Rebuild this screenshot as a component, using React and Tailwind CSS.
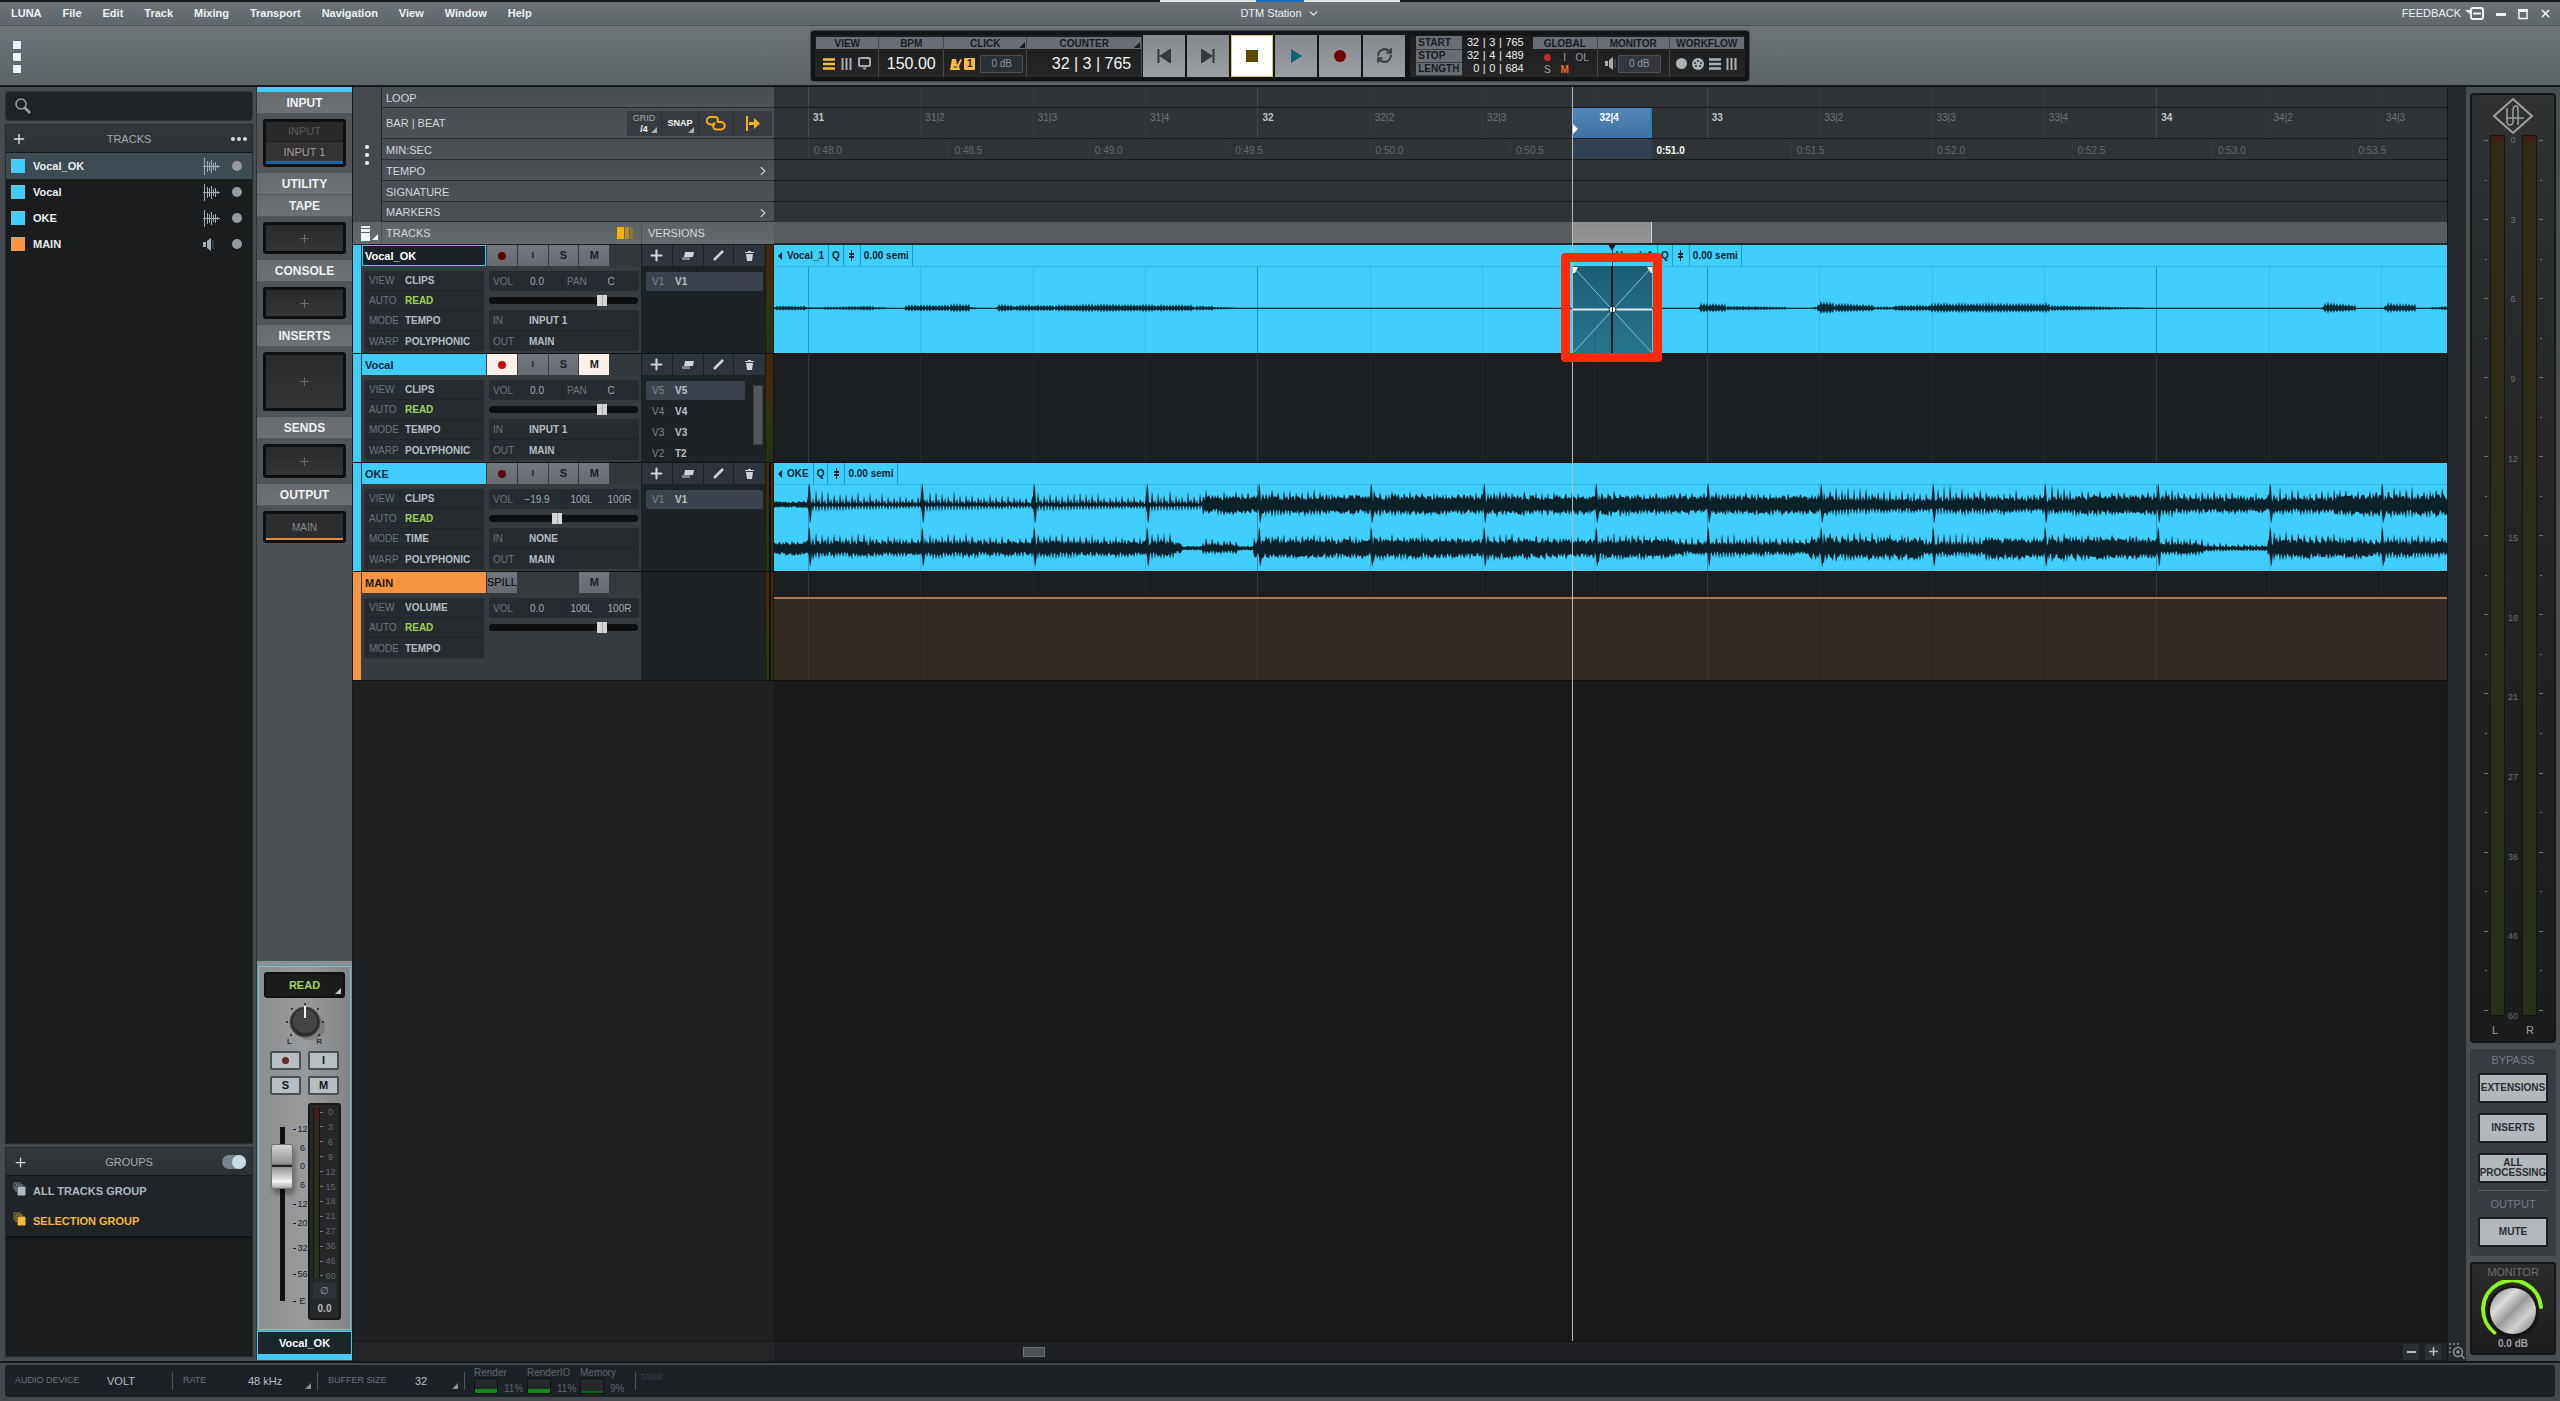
import { useState } from 'react'
import { ChevronDown, ChevronRight, Plus, RefreshCw, X } from 'lucide-react'

const menuItems = ['LUNA', 'File', 'Edit', 'Track', 'Mixing', 'Transport', 'Navigation', 'View', 'Window', 'Help']

const tracks = [
  {
    name: 'Vocal_OK', selected: true, vol: '0.0', level: 78, pan: ['C'],
    info: [['VIEW', 'CLIPS'], ['AUTO', 'READ'], ['MODE', 'TEMPO'], ['WARP', 'POLYPHONIC']],
    io: [['IN', 'INPUT 1'], ['OUT', 'MAIN']],
    versions: [['V1', 'V1']],
  },
  {
    name: 'Vocal', armed: true, muted: true, vol: '0.0', level: 78, pan: ['C'],
    info: [['VIEW', 'CLIPS'], ['AUTO', 'READ'], ['MODE', 'TEMPO'], ['WARP', 'POLYPHONIC']],
    io: [['IN', 'INPUT 1'], ['OUT', 'MAIN']],
    versions: [['V5', 'V5'], ['V4', 'V4'], ['V3', 'V3'], ['V2', 'T2']],
  },
  {
    name: 'OKE', stereo: true, vol: '−19.9', level: 45, pan: ['100L', '100R'],
    info: [['VIEW', 'CLIPS'], ['AUTO', 'READ'], ['MODE', 'TIME'], ['WARP', 'POLYPHONIC']],
    io: [['IN', 'NONE'], ['OUT', 'MAIN']],
    versions: [['V1', 'V1']],
  },
  {
    name: 'MAIN', stereo: true, main: true, vol: '0.0', level: 78, pan: ['100L', '100R'],
    info: [['VIEW', 'VOLUME'], ['AUTO', 'READ'], ['MODE', 'TEMPO']],
    io: [],
    versions: [],
  },
]

// The visible timeline is 1673 units wide, bar 31 starts at unit 34
const VIEW_W = 1673
const FIRST_BEAT = 34
const BEAT = 112.35
const HALF_SECOND = 140.4
const pct = (units) => `${(units / VIEW_W) * 100}%`

const beats = Array.from({ length: 15 }, (_, i) => ({
  x: FIRST_BEAT + i * BEAT,
  bar: i % 4 === 0,
  label: i % 4 === 0 ? `${31 + i / 4}` : `${31 + Math.floor(i / 4)}|${(i % 4) + 1}`,
}))

const times = Array.from({ length: 12 }, (_, i) => ({
  x: FIRST_BEAT + i * HALF_SECOND,
  label: `0:${(48 + i * 0.5).toFixed(1)}`,
}))

const noise = (n) => {
  const v = Math.sin(n * 12.9898) * 43758.5453
  return v - Math.floor(v)
}

function toPath(up, down, center) {
  const top = up.map((v, x) => `${x},${(center - v).toFixed(1)}`)
  const bottom = down.map((v, x) => `${x},${(center + v).toFixed(1)}`).reverse()
  return `M${top.join('L')}L${bottom.join('L')}Z`
}

// from, to, start level, end level
const vocalParts = [
  [0, 33, 3, 3], [33, 48, 1, 1], [48, 100, 2, 3], [100, 112, 2, 1],
  [131, 175, 4, 4], [175, 196, 5, 5], [196, 203, 2, 1],
  [223, 240, 5, 4], [240, 280, 4, 4], [280, 320, 4, 5], [320, 420, 5, 4], [420, 440, 3, 3], [440, 462, 2, 1],
  [925, 952, 6, 5], [952, 1012, 3, 2],
  [1037, 1044, 1, 2], [1044, 1060, 9, 7], [1060, 1101, 6, 4], [1101, 1119, 2, 2], [1119, 1155, 4, 4],
  [1155, 1276, 6, 6], [1276, 1370, 4, 1],
  [1549, 1582, 7, 4], [1611, 1642, 6, 5], [1656, 1673, 1, 3],
]

function vocalPath() {
  const up = []
  for (let x = 0; x <= VIEW_W; x++) {
    const part = vocalParts.find(([a, b]) => x >= a && x < b)
    let v = 0.6
    if (part) {
      const [a, b, s, e] = part
      const level = s + ((e - s) * (x - a)) / (b - a)
      const edge = Math.min(1, (x - a + 2) / 4)
      v = Math.max(0.8, level * edge * (x % 3 === 0 ? 1 : 0.5) * (0.8 + noise(x) * 0.3))
    }
    up.push(v)
  }
  return toPath(up, up.map((v) => v * 0.75), 64)
}

// from, to, body, peaks
const upperParts = [[0, 34, 3, 2], [34, 429, 2, 11], [429, 560, 8, 9], [560, 780, 9, 6], [780, 1060, 9, 6], [1060, 1180, 6, 13], [1180, 1300, 7, 11], [1300, 1400, 9, 8], [1400, 1560, 7, 9], [1560, 1674, 10, 9]]
const lowerParts = [[0, 34, 7, 4], [34, 400, 7, 9], [400, 408, 5, 5], [408, 429, 2, 1], [429, 464, 4, 9], [464, 480, 2, 2], [480, 900, 9, 7], [900, 1036, 6, 9], [1036, 1150, 10, 7], [1150, 1210, 6, 10], [1210, 1384, 10, 7], [1384, 1430, 5, 7], [1430, 1494, 2, 5], [1494, 1600, 9, 8], [1600, 1674, 7, 9]]

function mixPath(parts, center, seed) {
  const up = []
  const down = []
  for (let x = 0; x <= VIEW_W; x++) {
    const [, , body, peak] = parts.find(([a, b]) => x >= a && x < b)
    const sinceBeat = (((x - FIRST_BEAT) % BEAT) + BEAT) % BEAT
    const fall = 1.1 - sinceBeat / 180
    const tooth = x % 6 === 0 ? 1 : x % 6 === 1 ? 0.3 : x % 3 === 0 ? 0.4 : 0
    let u = body * (0.45 + noise(x + seed) * 0.55) + tooth * peak * fall * (0.7 + noise(x * 3 + seed) * 0.6)
    let d = body * (0.5 + noise(x * 7 + seed) * 0.6) + (x % 3 === 0 ? 0.5 : 0) * peak * fall
    if (sinceBeat < 4 && x > 30) {
      u = [9, 22, 17, 3][Math.floor(sinceBeat)]
      d = [4, 9, 19, 15][Math.floor(sinceBeat)]
    }
    up.push(u)
    down.push(d)
  }
  return toPath(up, down, center)
}

const vocalWave = vocalPath()
const upperWave = mixPath(upperParts, 42, 11)
const lowerWave = mixPath(lowerParts, 86, 57)

function Corner({ className = '' }) {
  return (
    <svg width="6" height="6" viewBox="0 0 6 6" className={className} aria-hidden="true">
      <path d="M6 0V6H0Z" fill="currentColor" />
    </svg>
  )
}

function MenuBar() {
  return (
    <header className="h-[26px] shrink-0 border-t-2 border-b border-t-[#17181c] border-b-[#4c5255] bg-linear-to-b from-[#6c7276] to-[#5f676b] grid grid-cols-[1fr_auto_1fr] items-center text-[11px] text-[#eef3f5]">
      <nav className="flex gap-[21px] pl-[11px] font-bold">
        {menuItems.map((item) => (
          <button key={item} type="button">{item}</button>
        ))}
      </nav>
      <div className="relative h-full flex items-center">
        <span className="absolute -top-[2px] left-1/2 -translate-x-1/2 w-[240px] h-[2px] bg-[#dfe6ea] flex justify-center">
          <span className="w-12 h-[2px] bg-[#1d6fc0]" />
        </span>
        <button type="button" className="flex items-center gap-[5px]">
          DTM Station <ChevronDown size={13} strokeWidth={2} />
        </button>
      </div>
      <div className="flex items-center justify-end pr-1">
        <button type="button" className="flex items-center gap-1 mr-[5px]">
          FEEDBACK
          <svg width="20" height="13" viewBox="0 0 20 13" fill="none" stroke="currentColor" strokeWidth="2">
            <rect x="6" y="1" width="12" height="11" rx="2" />
            <path d="M8 6.500H16" />
            <path d="M0 3H6V8Z" fill="currentColor" stroke="none" />
          </svg>
        </button>
        <button type="button" aria-label="Minimize" className="w-[22px] flex justify-center">
          <svg width="10" height="12"><rect y="5" width="10" height="3" fill="currentColor" /></svg>
        </button>
        <button type="button" aria-label="Restore" className="w-[22px] flex justify-center">
          <svg width="10" height="12" fill="none" stroke="currentColor"><path d="M1 2.500H9V10.500H1Z" strokeWidth="1.500" /><path d="M0 2.500H10" strokeWidth="3" /></svg>
        </button>
        <button type="button" aria-label="Close" className="w-[22px] flex justify-center"><X size={13} strokeWidth={3} /></button>
      </div>
    </header>
  )
}

function Cell({ title, corner, className, children }) {
  return (
    <div className={`flex flex-col border-r border-[#45494c] ${className}`}>
      <div className="relative h-[12px] bg-[#686e74] text-[#191b1e] text-[10px] leading-[14px] font-bold text-center">
        {title}
        {corner && <Corner className="absolute right-px bottom-px" />}
      </div>
      <div className="flex-1 flex items-center pt-[2px]">{children}</div>
    </div>
  )
}

function HBars({ className = '' }) {
  return <svg width="12" height="12" className={className}><path d="M0 1.500H12M0 6H12M0 10.500H12" stroke="currentColor" strokeWidth="2.500" /></svg>
}

function VBars({ className = '' }) {
  return <svg width="11" height="12" className={className}><path d="M1.500 0V12M5.500 0V12M9.500 0V12" stroke="currentColor" strokeWidth="2" /></svg>
}

function Speaker() {
  return (
    <svg width="13" height="13" viewBox="0 0 13 13" aria-hidden="true">
      <path d="M0 4H3V9H0Z M4 3L8 0V13L4 10Z" fill="currentColor" />
      <path d="M10 2V11" stroke="currentColor" strokeOpacity=".4" />
    </svg>
  )
}

function TransportBar() {
  const [mode, setMode] = useState('stop')
  const buttons = [
    ['back', <path key="b" d="M1.500 0V14M13 1V13L4 7Z" />],
    ['forward', <path key="f" d="M12.500 0V14M1 1V13L10 7Z" />],
    ['stop', <path key="s" d="M1 1H13V13H1Z" stroke="none" />],
    ['play', <path key="p" d="M2 0L13 7L2 14Z" stroke="none" fill="#11616e" />],
    ['record', <circle key="r" cx="7" cy="7" r="6" stroke="none" fill="#6d0508" />],
  ]
  return (
    <div className="h-[61px] shrink-0 border-b-2 border-[#15171a] bg-linear-to-b from-[#6e7578] to-[#5d6466] flex items-center">
      <button type="button" aria-label="Show panels" className="w-8 pl-[13px] pt-[2px] flex flex-col gap-1">
        {[0, 1, 2].map((i) => <span key={i} className="size-2 bg-[#e9f3f8] shadow-[0_0_1px_#2d3236]" />)}
      </button>
      <div className="flex-1 flex justify-center pr-8">
        <div className="h-[50px] p-1 rounded-[3px] bg-[#131415] flex items-stretch shadow-[0_0_1px_1px_#3f4548]">
          <div className="flex pt-[2px] pl-px bg-linear-to-b from-[#1c1c1d] to-[#262627]">
            <Cell title="VIEW" className="w-[63px]">
              <div className="w-full flex justify-center items-center gap-[6px] text-[#a5acb2]">
                <button type="button" aria-label="Timeline view"><HBars className="text-[#f5bd45]" /></button>
                <button type="button" aria-label="Mixer view"><VBars /></button>
                <button type="button" aria-label="Display view">
                  <svg width="13" height="13" fill="none" stroke="currentColor" strokeWidth="2"><rect x="1" y="1" width="11" height="8" rx="1" /><path d="M4 10.500H9L6.500 13Z" fill="currentColor" stroke="none" /></svg>
                </button>
              </div>
            </Cell>
            <Cell title="BPM" className="w-[65px]">
              <span className="w-full text-center text-base leading-4 text-[#f4f4f4]">150.00</span>
            </Cell>
            <Cell title="CLICK" corner className="w-[83px]">
              <button type="button" aria-label="Click" className="ml-[6px] flex items-center gap-[2px] text-[#f7bd46]">
                <svg width="12" height="12"><path d="M2 1H6L7 7L10.500 1L12 2L9 8L10 12H0Z" fill="currentColor" /><path d="M3.500 9L7.500 9" stroke="#222" strokeWidth="1" /></svg>
                <span className="w-[11px] h-3 rounded-[1px] bg-[#f7bd46] text-[#222] text-[10px] leading-3 font-bold text-center">1</span>
              </button>
              <button type="button" className="ml-[5px] w-[43px] h-[18px] rounded-[1px] border border-[#4b4f54] bg-[#2c2f33] text-[10px] text-[#8f959b]">0 dB</button>
            </Cell>
            <Cell title="COUNTER" corner className="w-[115px]">
              <span className="w-full pr-[10px] text-right text-base leading-4 text-[#f4f4f4]">32 | 3 | 765</span>
            </Cell>
          </div>
          <div className="flex gap-[2px] px-px">
            {buttons.map(([name, shape]) => (
              <button
                key={name}
                type="button"
                aria-label={name}
                onClick={() => setMode(name)}
                className={`w-[42px] flex items-center justify-center ${mode === name ? 'bg-white shadow-[inset_0_0_0_1px_#e3c878]' : 'bg-linear-to-b from-[#85898d] to-[#9ba0a4]'}`}
              >
                <svg width="14" height="14" fill={mode === name ? '#604700' : '#33383c'} stroke="#33383c" strokeWidth="2">{shape}</svg>
              </button>
            ))}
            <button type="button" aria-label="loop" className="w-[42px] flex items-center justify-center bg-linear-to-b from-[#85898d] to-[#9ba0a4] text-[#3a3f43]"><RefreshCw size={17} strokeWidth={3} /></button>
          </div>
          <div className="ml-1 pl-[6px] pr-[9px] pt-px flex items-center bg-linear-to-b from-[#1c1c1d] to-[#262627]">
            <table className="text-[11px] leading-[13px] text-[#f0f0f0]">
              <tbody>
                {[['START', '32', '3', '765'], ['STOP', '32', '4', '489'], ['LENGTH', '0', '0', '684']].map(([label, a, b, c]) => (
                  <tr key={label}>
                    <th scope="row" className="w-[46px] h-[12px] p-0 pl-[2px] border-b border-[#3c4043] bg-[#686e74] text-left text-[10px] leading-[12px] text-[#191b1e]">{label}</th>
                    <td className="w-[17px] p-0 text-right">{a}</td>
                    <td className="w-[10px] p-0 text-center">|</td>
                    <td className="p-0">{b}</td>
                    <td className="w-[10px] p-0 text-center">|</td>
                    <td className="p-0">{c}</td>
                  </tr>
                ))}
              </tbody>
            </table>
          </div>
          <div className="flex pt-[2px] pr-px bg-linear-to-b from-[#1c1c1d] to-[#262627]">
            <Cell title="GLOBAL" className="w-[65px]">
              <div className="w-full px-[6px] grid grid-cols-3 text-[10px] leading-[12px] text-[#9da3a9] text-center">
                <button type="button" aria-label="Global record" className="flex items-center justify-center"><span className="size-[7px] rounded-full bg-[#c42c2e]" /></button>
                <button type="button">I</button>
                <button type="button">OL</button>
                <button type="button">S</button>
                <button type="button" className="font-bold text-[#ee6a2c]">M</button>
              </div>
            </Cell>
            <Cell title="MONITOR" className="w-[72px]">
              <div className="pl-[7px] flex items-center text-[#a5acb2]">
                <Speaker />
                <button type="button" className="w-[43px] h-[18px] rounded-[1px] border border-[#4b4f54] bg-[#33363a] text-[10px] text-[#8f959b]">0 dB</button>
              </div>
            </Cell>
            <Cell title="WORKFLOW" className="w-[74px] border-r-0">
              <div className="w-full flex items-center justify-center gap-[5px] text-[#abb2b8]">
                <span className="size-[11px] rounded-full bg-[#abb2b8]" />
                <svg width="12" height="12"><circle cx="6" cy="6" r="6" fill="currentColor" /><g fill="#26282a"><circle cx="3" cy="5" r="1" /><circle cx="6" cy="3" r="1" /><circle cx="9" cy="5" r="1" /><circle cx="4" cy="8" r="1" /><circle cx="8" cy="8" r="1" /></g></svg>
                <HBars />
                <VBars />
              </div>
            </Cell>
          </div>
        </div>
      </div>
    </div>
  )
}

function TrackWave() {
  return (
    <svg width="17" height="17" viewBox="0 0 17 17" fill="none" stroke="currentColor" aria-hidden="true">
      <path d="M1.500 0V17M4.500 3V14M6.500 4V13M8.500 2V15M10.500 5V12M12.500 4V13M14.500 7V10M0 8.500H17" strokeWidth="1" />
    </svg>
  )
}

function Sidebar() {
  const [groupsOn, setGroupsOn] = useState(true)
  return (
    <aside className="w-64 shrink-0 pt-[5px] pb-[5px] pl-[6px] pr-1 bg-[#484c50] flex flex-col gap-[5px]">
      <label className="h-7 shrink-0 rounded-[3px] bg-[#1f2325] flex items-center px-2 shadow-[0_0_1px_1px_#2f3335]">
        <svg width="18" height="18" viewBox="0 0 18 18" fill="none" stroke="#9aa0a4" strokeWidth="1.500" aria-hidden="true"><circle cx="7" cy="7" r="5" /><path d="M10.500 10.500L16 16" strokeWidth="2.500" /></svg>
        <input type="search" aria-label="Search tracks" className="flex-1 bg-transparent outline-none text-[11px] text-white" />
      </label>

      <section className="flex-1 bg-[#1a1c1e] shadow-[0_0_1px_1px_#2a2d30]">
        <div className="h-7 pt-px border-b border-[#17191b] bg-linear-to-b from-[#34383b] to-[#2c3033] flex items-center justify-between px-[2px] text-[11px] text-[#a5abb0]">
          <button type="button" aria-label="Add track" className="w-9 pl-[3px]"><Plus size={16} strokeWidth={2} className="text-[#dde3e6]" /></button>
          TRACKS
          <button type="button" aria-label="Track list options" className="w-9 flex justify-end gap-[2px] pr-[3px]">
            {[0, 1, 2].map((i) => <span key={i} className="size-1 rounded-full bg-[#d5dadd]" />)}
          </button>
        </div>
        <ul>
          {tracks.map((track) => (
            <li key={track.name} className={`h-[26px] flex items-center pl-[5px] pr-[10px] ${track.selected ? 'bg-[#3f4b52]' : ''}`}>
              <span className={`w-[14px] h-[14px] border-l border-t border-[#9bb6c0] ${track.main ? 'bg-[#f99443]' : 'bg-[#40ccff]'}`} />
              <span className="ml-2 flex-1 text-[11px] font-bold text-[#eceff1]">{track.name}</span>
              <span className="w-[17px] mr-3 text-[#a4b0b7]">{track.main ? <Speaker /> : <TrackWave />}</span>
              <span className="size-[10px] rounded-full bg-[#949a9f]" />
            </li>
          ))}
        </ul>
      </section>

      <section className="h-52 shrink-0 bg-[#1a1c1e] shadow-[0_0_1px_1px_#2a2d30]">
        <div className="h-7 pt-px border-b border-[#17191b] bg-linear-to-b from-[#34383b] to-[#2c3033] flex items-center justify-between px-[2px] text-[11px] text-[#a5abb0]">
          <button type="button" aria-label="Add group" className="w-9 pl-[5px]"><Plus size={15} strokeWidth={2} className="text-[#dde3e6]" /></button>
          GROUPS
          <label className="w-9 flex justify-end pr-1">
            <input type="checkbox" aria-label="Enable groups" checked={groupsOn} onChange={() => setGroupsOn(!groupsOn)} className="peer sr-only" />
            <span className="w-6 h-[14px] rounded-full bg-[#75838c] flex peer-checked:justify-end"><span className="size-[14px] rounded-full bg-[#c9dbe3]" /></span>
          </label>
        </div>
        <ul className="border-b-2 border-[#121415] bg-[#202427] text-[11px] font-bold">
          {[['ALL TRACKS GROUP', 'text-[#aeb9c0]'], ['SELECTION GROUP', 'text-[#f3b73f]']].map(([name, tone]) => (
            <li key={name} className={`h-[30px] flex items-center pl-[7px] gap-[7px] ${tone}`}>
              <svg width="13" height="14" viewBox="0 0 13 14" fill="none" stroke="currentColor" className="mb-1"><path d="M1 8V1H8" strokeOpacity=".6" /><path d="M3 10V3H10" strokeOpacity=".8" /><path d="M5 5H12V13H5Z" fill="currentColor" /></svg>
              {name}
            </li>
          ))}
        </ul>
      </section>
    </aside>
  )
}

function StripHeader({ children }) {
  return <h3 className="h-[22px] border-b border-[#55595c] bg-linear-to-b from-[#676b6e] to-[#6e7275] text-[12px] leading-[23px] font-bold text-center text-[#f0f2f3]">{children}</h3>
}

function Slot({ className }) {
  return (
    <div className="pt-[5px] pb-[6px] px-[6px] bg-[#505457]">
      <button type="button" aria-label="Add" className={`w-full rounded-[3px] border-[3px] border-[#0e0f10] bg-linear-to-b from-[#292a2b] to-[#343536] flex items-center justify-center text-[#6a6c6e] ${className}`}>
        <Plus size={13} strokeWidth={2} />
      </button>
    </div>
  )
}

const faderMarks = [['12', 'mt-0'], ['6', 'mt-[9px]'], ['0', 'mt-2'], ['6', 'mt-[9px]'], ['12', 'mt-[9px]'], ['20', 'mt-[9px]'], ['32', 'mt-[15px]'], ['56', 'mt-4'], ['E', 'mt-[17px]']]
const meterMarks = ['0', '3', '6', '9', '12', '15', '18', '21', '27', '36', '46', '60']

function ChannelStrip() {
  return (
    <section className="w-24 shrink-0 bg-[#4c5154] border-l border-[#303335] flex flex-col">
      <div className="h-[5px] bg-[#47caf8]" />
      <StripHeader>INPUT</StripHeader>
      <div className="pt-[5px] pb-[6px] px-[6px] bg-[#505457]">
        <div className="h-12 rounded-[3px] border-[3px] border-[#0e0f10] bg-[#29292a] text-[11px] text-center flex flex-col">
          <button type="button" className="h-[20px] border-b border-[#1c1c1d] text-[#58595a]">INPUT</button>
          <button type="button" className="flex-1 bg-[#333334] border-b-[3px] border-[#20639e] text-[#9c9d9e] leading-3">INPUT 1</button>
        </div>
      </div>
      <StripHeader>UTILITY</StripHeader>
      <StripHeader>TAPE</StripHeader>
      <Slot className="h-8" />
      <StripHeader>CONSOLE</StripHeader>
      <Slot className="h-8" />
      <StripHeader>INSERTS</StripHeader>
      <Slot className="h-[59px]" />
      <StripHeader>SENDS</StripHeader>
      <Slot className="h-[34px]" />
      <StripHeader>OUTPUT</StripHeader>
      <div className="pt-[5px] px-[6px]">
        <button type="button" className="w-full h-8 rounded-[3px] border-[3px] border-[#0e0f10] bg-[#2c2d2e] text-[10px] text-[#8a8b8c] shadow-[inset_0_-2px_0_#e58b3f]">MAIN</button>
      </div>

      <div className="mt-auto h-1 bg-[#909395]" />
      <div className="h-[366px] border border-[#5d9aac] bg-linear-to-r from-[#8c8f90] via-[#999a9b] to-[#828485] px-[6px] pt-[6px] flex flex-col items-center shadow-[inset_0_0_0_1px_#aab0b2]">
        <button type="button" className="relative w-full h-[26px] shrink-0 rounded-[3px] border-2 border-[#101112] bg-[#1a1c1b] text-[11px] font-bold text-[#a4d458]">
          READ
          <Corner className="absolute right-[2px] bottom-[2px] text-[#c5c9cb]" />
        </button>
        <svg width="50" height="38" viewBox="0 0 50 38" className="mt-1 shrink-0" role="img" aria-label="Pan">
          <g fill="#1c1c1c">
            <circle cx="25" cy="2" r="1" /><circle cx="12" cy="7" r="1" /><circle cx="38" cy="7" r="1" /><circle cx="7" cy="20" r="1" /><circle cx="43" cy="20" r="1" /><circle cx="11" cy="33" r="1" /><circle cx="39" cy="33" r="1" />
          </g>
          <ellipse cx="30" cy="25" rx="15" ry="13" fill="#000" fillOpacity=".15" />
          <circle cx="25" cy="20" r="15" fill="#2e2e2e" stroke="#4c4c4c" strokeWidth="1" />
          <circle cx="25" cy="19" r="12" fill="#444445" />
          <path d="M25 4V16" stroke="#f2f2f2" strokeWidth="2" />
        </svg>
        <div className="w-[35px] h-2 -mt-[2px] flex justify-between text-[8px] leading-[8px] font-bold text-[#333]"><span>L</span><span>R</span></div>
        <div className="mt-[5px] grid grid-cols-[31px_31px] gap-x-[7px] gap-y-[6px] text-[11px] font-bold text-[#17191b]">
          <button type="button" aria-label="Record arm" className="h-[19px] rounded-[2px] border-2 border-[#4c4f51] bg-[#b9bec3] flex items-center justify-center"><span className="size-[7px] rounded-full bg-[#6b2325]" /></button>
          <button type="button" className="h-[19px] rounded-[2px] border-2 border-[#4c4f51] bg-[#b9bec3] leading-[15px]">I</button>
          <button type="button" className="h-[19px] rounded-[2px] border-2 border-[#4c4f51] bg-[#b9bec3] leading-[15px]">S</button>
          <button type="button" className="h-[19px] rounded-[2px] border-2 border-[#4c4f51] bg-[#b9bec3] leading-[15px]">M</button>
        </div>
        <div className="w-full mt-2 flex">
          <div className="flex-1 flex items-start pl-[7px] pt-[24px]">
            <input
              type="range"
              aria-label="Channel fader"
              defaultValue="87"
              className="w-[22px] h-[174px] appearance-none [writing-mode:vertical-lr] [direction:rtl] bg-[linear-gradient(#111,#111)] bg-[length:5px_100%] bg-center bg-no-repeat [&::-webkit-slider-thumb]:appearance-none [&::-webkit-slider-thumb]:w-[22px] [&::-webkit-slider-thumb]:h-[45px] [&::-webkit-slider-thumb]:rounded-[3px] [&::-webkit-slider-thumb]:border [&::-webkit-slider-thumb]:border-[#707274] [&::-webkit-slider-thumb]:bg-[linear-gradient(#d5d5d5,#8f8f8f_45%,#222_46%,#222_50%,#909090_51%,#f2f2f2_85%,#aaa)] [&::-webkit-slider-thumb]:shadow-[2px_5px_5px_rgba(0,0,0,.35)]"
            />
            <ol className="flex flex-col -mt-[3px] text-[9px] leading-[10px] text-[#1b1b1b]">
              {faderMarks.map(([mark, gap], i) => (
                <li key={i} className={`flex items-center justify-end gap-px ${gap}`}>
                  {mark.length > 1 || mark === 'E' ? <span className="w-[3px] h-px bg-[#1b1b1b]" /> : null}
                  <span className="w-[11px] text-center">{mark}</span>
                </li>
              ))}
            </ol>
          </div>
          <div className="w-[33px] h-[217px] mr-1 rounded-[3px] border-2 border-[#161718] bg-[#262728] px-[3px] flex flex-col">
            <div className="h-[175px] flex pt-[2px]">
              <div className="w-[7px] h-[171px] bg-linear-to-b from-[#3e1a18] from-5% via-[#2f2a1b] via-10% to-[#27331d] border-x border-[#121314]" />
              <ol className="flex-1 h-[174px] flex flex-col justify-between text-[9px] leading-[10px] text-[#67696b]">
                {meterMarks.map((mark) => (
                  <li key={mark} className="flex items-center gap-[2px]"><span className="w-[3px] h-px bg-[#77797b]" /><span className="w-[11px] text-center">{mark}</span></li>
                ))}
              </ol>
            </div>
            <button type="button" aria-label="Phase" className="h-[17px] mt-[2px] bg-[#2d3034] text-[10px] leading-[17px] text-[#9ba1a5]">∅</button>
            <span className="mt-1 text-[10px] leading-3 font-bold text-center text-[#b9bcbe]">0.0</span>
          </div>
        </div>
      </div>
      <div className="h-[23px] border border-b-0 border-[#46c8f5] bg-[#1b262b] text-[11px] leading-[23px] font-bold text-center text-white">Vocal_OK</div>
      <div className="h-[6px] mb-px bg-[#46c8f5]" />
    </section>
  )
}

function RulerHeaders() {
  const rowClass = 'pl-1 border-b border-[#2a2d30] bg-linear-to-b from-[#484d51] to-[#4d5256] flex items-center justify-between'
  return (
    <div className="h-[135px] shrink-0 flex text-[11px] text-[#d3d8db]">
      <button type="button" aria-label="Ruler options" className="w-[29px] bg-[#45494d] border-r border-[#212427] flex flex-col items-center justify-center gap-1">
        {[0, 1, 2].map((i) => <span key={i} className="size-1 rounded-full bg-[#f0f3f5]" />)}
      </button>
      <div className="flex-1 grid grid-rows-[21px_31px_21px_21px_21px_20px]">
        <div className={`${rowClass} pt-[2px]`}>LOOP</div>
        <div className={`${rowClass} pt-px`}>
          BAR | BEAT
          <div className="h-[25px] mr-[2px] bg-[#383c40] grid grid-cols-[35px_37px_35px_38px] divide-x divide-[#2c3033]">
            <button type="button" className="relative text-[9px] leading-[11px] text-[#a4a9ad]">GRID<br /><b className="text-white">/4</b><Corner className="absolute right-1 bottom-[3px] text-[#aab0b4]" /></button>
            <button type="button" className="relative pt-px text-[9px] font-bold text-[#f3f5f6]">SNAP<Corner className="absolute right-1 bottom-[3px] text-[#aab0b4]" /></button>
            <button type="button" aria-label="Link" className="flex items-center justify-center">
              <svg width="20" height="15" fill="none" stroke="#f5ae17" strokeWidth="2"><path d="M11 6.500A3.500 3.500 0 0 0 10 1H4.500A3.500 3.500 0 0 0 4.500 8.500H9" /><path d="M9 7A3.500 3.500 0 0 0 10 13.500H15A3.500 3.500 0 0 0 15 6H11" /></svg>
            </button>
            <button type="button" aria-label="Follow playhead" className="flex items-center justify-center">
              <svg width="14" height="15" fill="#f5b22d"><path d="M0 0H2V15H0Z M3 6H8V2L14 7.500L8 13V9H3Z" /></svg>
            </button>
          </div>
        </div>
        <div className={`${rowClass} pt-[2px]`}>MIN:SEC</div>
        <div className={`${rowClass} pt-[2px]`}>TEMPO<ChevronRight size={14} className="mr-1" /></div>
        <div className={`${rowClass} pt-[2px]`}>SIGNATURE</div>
        <div className={`${rowClass} pt-[2px]`}>MARKERS<ChevronRight size={14} className="mr-1" /></div>
      </div>
    </div>
  )
}

function TrackButton({ children, on, label, wide }) {
  return (
    <button
      type="button"
      aria-label={label}
      className={`h-[21px] flex items-center justify-center text-[11px] ${on ? 'bg-[#fdf0ea]' : 'bg-linear-to-b from-[#73787e] to-[#666b71]'} ${wide ? 'text-black' : 'font-bold text-[#1d2125]'}`}
    >
      {children}
    </button>
  )
}

function InfoSelect({ label, value }) {
  return (
    <label className="h-5 pl-1 flex items-center text-[10px] text-[#6d767b]">
      <span className="w-9">{label}</span>
      <select className={`flex-1 appearance-none bg-transparent font-bold ${value === 'READ' ? 'text-[#a0d35a]' : 'text-[#b6bfc4]'}`}>
        <option>{value}</option>
      </select>
    </label>
  )
}

function TrackHeader({ track }) {
  const nameClass = track.selected
    ? 'bg-[#1a2226] border border-[#4ac6f0] text-white'
    : track.main ? 'bg-[#f99443] border border-[#f99443] text-[#26180c]' : 'bg-[#40ccff] border border-[#40ccff] text-[#0b2a3a]'
  return (
    <div className="h-[109px] shrink-0 border-b border-[#0f1012] flex bg-[#383b3d]">
      <div className={`w-2 mr-px ${track.main ? 'bg-[#f99443]' : 'bg-[#40ccff]'}`} />
      <div className="w-[125px] pr-px">
        <div className={`h-[21px] pl-[2px] text-[11px] leading-[20px] font-bold ${nameClass}`}>{track.name}</div>
        <div className="mt-[5px] ml-[3px] mr-[2px] rounded-[3px] bg-[#252b2e] divide-y divide-[#1f2427] shadow-[0_0_1px_#17191b]">
          {track.info.map(([label, value]) => <InfoSelect key={label} label={label} value={value} />)}
        </div>
      </div>
      <div className="w-[155px] border-r border-[#1b1e20]">
        <div className="grid grid-cols-5 gap-px pr-px bg-[#36393c]">
          {track.main ? (
            <>
              <TrackButton wide>SPILL</TrackButton>
              <span />
              <span />
              <TrackButton>M</TrackButton>
            </>
          ) : (
            <>
              <TrackButton label="Record arm" on={track.armed}><span className={`size-2 rounded-full ${track.armed ? 'bg-[#c30f12]' : 'bg-[#570609]'}`} /></TrackButton>
              <TrackButton><span className="text-[9px]">I</span></TrackButton>
              <TrackButton>S</TrackButton>
              <TrackButton on={track.muted}>M</TrackButton>
              <span className="bg-[#33363a]" />
            </>
          )}
        </div>
        <div className="mt-[5px] mx-[2px] h-5 pt-px rounded-[3px] bg-[#252b2e] flex items-center text-[10px] text-[#a3acb1]">
          <span className="w-[30px] pl-1 text-[#6d767b]">VOL</span>
          <span className="w-9 text-center">{track.vol}</span>
          <span className="w-2 h-full border-r border-[#1f2427]" />
          {track.stereo ? (
            <>
              <span className="w-[37px] text-center">{track.pan[0]}</span>
              <span className="flex-1 text-center">{track.pan[1]}</span>
            </>
          ) : (
            <>
              <span className="w-7 pl-1 text-[#6d767b]">PAN</span>
              <span className="flex-1 text-center pr-2">{track.pan[0]}</span>
            </>
          )}
        </div>
        <input
          type="range"
          aria-label={`${track.name} volume`}
          defaultValue={track.level}
          className="block w-[149px] h-[11px] mt-1 mb-1 mx-[2px] appearance-none bg-transparent [&::-webkit-slider-runnable-track]:h-[7px] [&::-webkit-slider-runnable-track]:rounded-full [&::-webkit-slider-runnable-track]:bg-[#0d0f10] [&::-webkit-slider-thumb]:appearance-none [&::-webkit-slider-thumb]:-mt-[2px] [&::-webkit-slider-thumb]:w-[10px] [&::-webkit-slider-thumb]:h-[11px] [&::-webkit-slider-thumb]:bg-[linear-gradient(90deg,#d6d6d6_45%,#a8a8a8_46%,#a8a8a8_55%,#d6d6d6_56%)]"
        />
        {track.io.length > 0 && (
          <div className="mx-[2px] pt-px rounded-[3px] bg-[#252b2e] divide-y divide-[#1f2427]">
            {track.io.map(([label, value]) => <InfoSelect key={label} label={label} value={value} />)}
          </div>
        )}
      </div>
      <div className="flex-1 bg-[#1e2225] flex flex-col overflow-hidden">
        {!track.main && (
          <div className="h-[21px] shrink-0 grid grid-cols-4 divide-x divide-[#1c2023] bg-[#2e343b] text-[#cdd5da]">
            <button type="button" aria-label="New version" className="flex items-center justify-center"><Plus size={17} strokeWidth={3} /></button>
            <button type="button" aria-label="Duplicate version" className="flex items-center justify-center"><svg width="12" height="8" fill="currentColor"><path d="M3 0H12L11 5H2Z" /><path d="M0 5H8V8H0Z" fillOpacity=".5" /></svg></button>
            <button type="button" aria-label="Rename version" className="flex items-center justify-center"><svg width="11" height="11" fill="none" stroke="currentColor" strokeWidth="2.500"><path d="M1 10L10 1" /></svg></button>
            <button type="button" aria-label="Delete version" className="flex items-center justify-center"><svg width="9" height="10" fill="currentColor"><path d="M0 1H3V0H6V1H9V2H0Z M1 3H8L7 10H2Z" /></svg></button>
          </div>
        )}
        <div className="flex-1 flex pt-[6px] pl-1 overflow-hidden">
          <ul className="flex-1 flex flex-col gap-[2px] pr-[2px] text-[10px]">
            {track.versions.map(([id, name], i) => (
              <li key={id} className={`h-[19px] shrink-0 rounded-[2px] pl-[6px] flex items-center ${i === 0 ? 'bg-[#3a434b]' : ''}`}>
                <span className="w-[23px] text-[#7e878d]">{id}</span>
                <span className="font-bold text-[#b9c1c6]">{name}</span>
              </li>
            ))}
          </ul>
          {track.versions.length > 3 && <div className="w-[10px] h-[60px] mt-1 ml-[6px] mr-[2px] bg-[#54585b] border border-[#393d40]" />}
        </div>
      </div>
      <div className="w-[9px] border-x border-[#16181a] bg-[#14120d] flex gap-[2px]">
        <div className="flex-1 bg-linear-to-b from-[#482706] from-15% via-[#2f3311] via-60% to-[#223313]" />
        {track.stereo && <div className="flex-1 bg-linear-to-b from-[#482706] from-15% via-[#2f3311] via-60% to-[#223313]" />}
      </div>
    </div>
  )
}

function TrackHeaders() {
  return (
    <section className="w-[422px] shrink-0 border-l border-[#17191b] bg-[#1e2022] flex flex-col">
      <RulerHeaders />
      <div className="h-[23px] shrink-0 border-b border-[#1b1e20] bg-linear-to-b from-[#5d6265] to-[#656a6d] flex items-center text-[11px] text-[#d3d8db]">
        <button type="button" aria-label="Track size" className="w-[29px] h-full pl-2 border-r border-[#4c5154] flex items-center gap-[2px]">
          <svg width="9" height="15" fill="#eef6fa"><path d="M0 0H9V2H0Z M0 3H9V6H0Z M0 7H9V15H0Z" /></svg>
          <Corner className="mt-2 text-[#eef6fa]" />
        </button>
        <span className="flex-1 pl-1 pt-px">TRACKS</span>
        <svg width="16" height="12" className="mr-2"><path d="M0 0H7V12H0Z" fill="#f5b30c" /><path d="M8 0H12V12H8Z" fill="#b58e2a" /><path d="M13 0H16V12H13Z" fill="#8d7534" /></svg>
        <span className="w-[133px] h-full pl-[6px] pt-px border-l border-[#4c5154] flex items-center">VERSIONS</span>
      </div>
      {tracks.map((track) => <TrackHeader key={track.name} track={track} />)}
      <div className="mt-auto h-5 border-t border-[#17191b] bg-[#232527]" />
    </section>
  )
}

function GridLines({ onClip, ruler }) {
  return beats.map((beat) => {
    const tone = onClip
      ? beat.bar ? 'bg-[#2596bc]' : 'bg-[#38bbe8]'
      : ruler ? (beat.bar ? 'bg-[#45494c]' : 'bg-[#36393d]') : beat.bar ? 'bg-[#34383a]' : 'bg-[#25282b]'
    return <span key={beat.label} className={`absolute inset-y-0 w-px ${tone}`} style={{ left: pct(beat.x) }} />
  })
}

function ClipTitle({ name, arrow }) {
  return (
    <div className="h-[21px] flex items-stretch text-[10px] leading-[22px] font-bold text-[#0c2733] divide-x divide-[#1d9cc9]">
      <span className="pl-1 pr-1 flex items-center gap-[5px]">
        {arrow && <svg width="4" height="8"><path d="M4 0V8L0 4Z" fill="currentColor" /></svg>}
        {name}
      </span>
      <span className="px-[3px]">Q</span>
      <span className="w-[17px] flex items-center justify-center"><svg width="5" height="11"><path d="M2.500 0V11" stroke="currentColor" /><path d="M0 3H5V5H0Z M0 6H5V8H0Z" fill="currentColor" /></svg></span>
      <span className="px-[3px]">0.00 semi</span>
      <span />
    </div>
  )
}

function Lane({ clip, children }) {
  return (
    <div className={`relative h-[109px] border-b border-[#0f1012] ${clip ? 'bg-[#40ceff]' : 'bg-[#1c1f22]'}`}>
      <div className={`absolute inset-x-0 bottom-0 ${clip ? 'top-[21px] border-t border-[#34b4e0]' : 'top-0'}`}>
        <GridLines onClip={clip} />
      </div>
      {children}
    </div>
  )
}

const SEL_START = 799
const SEL_WIDTH = 79

function Timeline() {
  const selection = { left: pct(SEL_START), width: pct(SEL_WIDTH) }
  return (
    <section className="relative flex-1 min-w-0 bg-[#17191b] flex flex-col overflow-hidden">
      {/* Rulers */}
      <div className="h-[135px] shrink-0 bg-[#303336] grid grid-rows-[21px_31px_21px_21px_21px_20px] divide-y divide-[#17191b] text-[10px]">
        <div className="relative"><GridLines ruler /></div>
        <div className="relative">
          <GridLines ruler />
          <div className="absolute inset-y-0 bg-linear-to-b from-[#5287b8] to-[#3d71a1] border-r-2 border-[#1b81b8]" style={selection}>
            <svg width="5" height="10" className="absolute left-0 bottom-1"><path d="M0 0L5 5L0 10Z" fill="#fff" /></svg>
          </div>
          {beats.map((beat) => {
            const inside = beat.label === '32|4'
            return (
              <span key={beat.label} className={`absolute top-1 pl-[5px] leading-[12px] ${inside ? 'font-bold text-white' : beat.bar ? 'font-bold text-[#bfc3c6]' : 'text-[#6e7275]'}`} style={{ left: pct(beat.x) }}>
                {beat.label}
              </span>
            )
          })}
        </div>
        <div className="relative">
          <div className="absolute inset-y-0 bg-[#2f4153]" style={selection} />
          {times.map((time) => (
            <span key={time.label} className={`absolute inset-y-0 pl-[5px] border-l border-[#36393d] leading-[24px] ${time.label === '0:51.0' ? 'font-bold text-white' : 'text-[#66696c]'}`} style={{ left: pct(time.x) }}>
              {time.label}
            </span>
          ))}
        </div>
        <div />
        <div />
        <div />
      </div>
      <div className="relative h-[23px] shrink-0 border-b-2 border-[#22272a] bg-[#585d60]">
        <div className="absolute inset-y-0 bg-linear-to-b from-[#8b8b8b] to-[#959595] border-r border-[#cfd2d3]" style={selection} />
      </div>

      {/* Lanes */}
      <Lane clip>
        <svg viewBox="0 0 1673 109" preserveAspectRatio="none" className="absolute inset-0 size-full" aria-hidden="true"><path d={vocalWave} fill="#0a2b38" /></svg>
        <div className="absolute top-0 left-0"><ClipTitle name="Vocal_1" arrow /></div>
        <div className="absolute top-0" style={{ left: pct(838) }}><ClipTitle name="Vocal_1" /></div>
        <svg viewBox="0 0 80 87" preserveAspectRatio="none" className="absolute top-[21px] bottom-0 h-[87px] bg-linear-to-b from-[#1e5e75] to-[#25758f]" style={selection} aria-hidden="true">
          <path d="M22 0V87" stroke="#1d647c" />
          <path d="M2 3L79 86M78 3L1 86" stroke="#88bccc" strokeWidth="1" fill="none" />
          <path d="M0 43.500H80" stroke="#d7edf3" strokeWidth="2" />
          <path d="M39.500 0V87" stroke="#061b23" strokeWidth="2" />
          <path d="M0 1H5L2 7H0Z M75 1H80V7H79Z" fill="#fff" />
          <circle cx="40" cy="43.500" r="3.500" fill="#fff" stroke="#0b2430" strokeWidth="1" />
          <path d="M40 40V47" stroke="#0b2430" />
        </svg>
        <span className="absolute top-0 h-[21px] w-px bg-[#0b2430]" style={{ left: pct(838) }} />
        <svg width="7" height="6" className="absolute top-0 -translate-x-1/2" style={{ left: pct(838) }}><path d="M0 0H7L3.500 6Z" fill="#05161d" /></svg>
      </Lane>
      <Lane />
      <Lane clip>
        <svg viewBox="0 0 1673 109" preserveAspectRatio="none" className="absolute inset-0 size-full" aria-hidden="true">
          <path d={upperWave} fill="#0a2129" />
          <path d={lowerWave} fill="#0a2129" />
        </svg>
        <div className="absolute top-0 left-0"><ClipTitle name="OKE" arrow /></div>
      </Lane>
      <Lane>
        <div className="absolute inset-x-0 bottom-0 top-[25px] border-t-2 border-[#a97a45] bg-[#332a24]">
          <GridLines />
        </div>
      </Lane>

      {/* Playhead and highlight frame */}
      <div className="absolute top-0 bottom-5 w-px bg-[#b9bcbd]" style={{ left: pct(798) }} />
      <div className="absolute top-[166px] h-[109px] border-[9px] border-[#ff2a08] rounded-[4px]" style={{ left: pct(787), width: pct(101) }} />

      {/* Horizontal scroll bar */}
      <div className="mt-auto h-5 border-t border-[#0f1012] bg-[#1f2124] flex items-center justify-end gap-[6px] pr-[6px] text-[#b7bcc0]">
        <div className="flex-1 flex"><span className="h-[10px] w-[22px] border border-[#6e7377] bg-[#4c5155]" style={{ marginLeft: pct(257) }} /></div>
        <button type="button" aria-label="Zoom out" className="w-4 h-4 bg-[#2c2f33] flex items-center justify-center"><svg width="9" height="2"><path d="M0 1H9" stroke="currentColor" strokeWidth="2" /></svg></button>
        <button type="button" aria-label="Zoom in" className="w-4 h-4 bg-[#2c2f33] flex items-center justify-center"><Plus size={13} strokeWidth={3} /></button>
      </div>
    </section>
  )
}

function BypassButton({ children }) {
  return <button type="button" className="w-full h-[30px] border-2 border-[#1c1e20] bg-[#b3b8bd] text-[10px] leading-[10px] font-bold text-[#2a2d30] flex items-center justify-center">{children}</button>
}

function MainMeter() {
  const bar = 'w-[15px] h-[881px] border border-[#141516] bg-linear-to-b from-[#421a16] from-0% via-[#322a17] via-1% to-[#25301b]'
  const ticks = (
    <div className="w-1 h-[881px] flex flex-col justify-between py-[5px]">
      {Array.from({ length: 23 }, (_, i) => <span key={i} className={`h-px bg-[#6c6e70] ${i % 2 ? 'w-[2px] mx-auto' : 'w-full'}`} />)}
    </div>
  )
  return (
    <div className="flex-1 min-h-0 rounded-[4px] border-2 border-[#141516] bg-linear-to-b from-[#303132] via-[#232323] to-[#1b1b1b] flex flex-col items-center">
      <svg width="42" height="38" viewBox="0 0 42 38" className="mt-[2px] shrink-0" fill="none" stroke="#9fa1a2" strokeWidth="2" role="img" aria-label="UA">
        <path d="M21 2L40 19L21 36L2 19Z" />
        <path d="M15 11V24Q15 28 18 28Q21 28 21 24V14Q21 9 24 9Q26 9 26 13V28M14 21H32" strokeWidth="1.500" />
      </svg>
      <div className="flex">
        <div className="mr-[2px]">{ticks}</div>
        <div className={bar} />
        <div className="w-[17px] h-[886px] flex flex-col justify-between text-[9px] leading-[10px] text-center text-[#6b6d6f]">
          {meterMarks.map((mark) => <span key={mark}>{mark}</span>)}
        </div>
        <div className={bar} />
        <div className="ml-[2px]">{ticks}</div>
      </div>
      <div className="w-[42px] mt-[3px] flex justify-between text-[11px] leading-3 text-[#a0a2a4]"><span>L</span><span>R</span></div>
    </div>
  )
}

function MasterPanel() {
  return (
    <aside className="w-[94px] shrink-0 pt-[6px] pb-[6px] pl-1 pr-1 bg-[#484e52] flex flex-col gap-[6px]">
      <MainMeter />
      <section className="shrink-0 h-[207px] rounded-[3px] bg-[#383c40] px-2 pt-1 text-[11px] leading-[15px] text-center text-[#777d82]">
        <h3>BYPASS</h3>
        <div className="mt-[5px] flex flex-col gap-[10px]">
          <BypassButton>EXTENSIONS</BypassButton>
          <BypassButton>INSERTS</BypassButton>
          <BypassButton>ALL<br />PROCESSING</BypassButton>
        </div>
        <h3 className="mt-[7px] pt-[6px] mb-[5px] border-t border-[#585d61]">OUTPUT</h3>
        <BypassButton>MUTE</BypassButton>
      </section>
      <section className="shrink-0 h-[93px] rounded-[3px] border-2 border-[#141516] bg-linear-to-b from-[#2c2c2c] to-[#1c1c1c] flex flex-col items-center">
        <h3 className="text-[11px] leading-4 text-[#6a6d6f]">MONITOR</h3>
        <svg width="64" height="58" viewBox="0 0 64 58" role="img" aria-label="Monitor level">
          <defs>
            <linearGradient id="knob" x1="0" y1="0" x2="1" y2="1">
              <stop offset="0" stopColor="#777" /><stop offset=".3" stopColor="#dcdcdc" /><stop offset=".5" stopColor="#9b9b9b" /><stop offset=".7" stopColor="#d0d0d0" /><stop offset="1" stopColor="#6e6e6e" />
            </linearGradient>
          </defs>
          <path d="M13.500 52.500A29 29 0 1 1 60 27" fill="none" stroke="#8bf81d" strokeWidth="4" strokeLinecap="round" />
          <circle cx="32" cy="32" r="26" fill="#151515" />
          <circle cx="32" cy="31" r="23" fill="url(#knob)" />
        </svg>
        <span className="text-[10px] leading-3 font-bold text-[#9fa2a4]">0.0 dB</span>
      </section>
    </aside>
  )
}

function StatusSelect({ label, value, className }) {
  return (
    <label className={`relative h-[18px] border-l border-[#4e5458] pl-[10px] flex items-center justify-between ${className}`}>
      <span className="text-[9px] text-[#6a7075]">{label}</span>
      <select className="appearance-none bg-transparent text-[11px] text-[#b9bfc3]"><option>{value}</option></select>
      <Corner className="absolute right-[6px] bottom-px text-[#8b9195]" />
    </label>
  )
}

function StatusBar() {
  return (
    <footer className="h-10 shrink-0 border-t-2 border-[#141618] bg-[#45494d] pt-[2px] pb-1 px-[5px]">
      <div className="h-full rounded-[3px] bg-[#1c2125] flex items-center pl-[10px]">
        <span className="w-[92px] text-[9px] text-[#6a7075]">AUDIO DEVICE</span>
        <span className="w-[65px] text-[11px] text-[#b9bfc3]">VOLT</span>
        <StatusSelect label="RATE" value="48 kHz" className="w-[145px] pr-[34px]" />
        <StatusSelect label="BUFFER SIZE" value="32" className="w-[147px] pr-[36px]" />
        <div className="h-[18px] border-l border-[#4e5458]" />
        {[['Render', '11%', 'w-[53px]', true], ['RenderIO', '11%', 'w-[53px]', true], ['Memory', '9%', 'w-[55px]', false]].map(([label, value, width, strong], i) => (
          <div key={label} className={`${i === 0 ? 'ml-[9px]' : ''} ${width} text-[10px] leading-[10px] text-[#5f6569]`}>
            <div>{label}</div>
            <div className="flex items-end gap-[6px]">
              <span className="w-6 h-4 border border-[#0e1011] bg-[#242829] flex items-end"><span className={`w-full ${strong ? 'h-1 bg-[#128a18]' : 'h-[2px] bg-[#0e6114]'}`} /></span>
              {value}
            </div>
          </div>
        ))}
        <div className="h-[18px] border-l border-[#4e5458] pl-1 text-[9px] leading-[10px] text-[#3c4246]">TASK</div>
      </div>
    </footer>
  )
}

export default function App() {
  return (
    <div className="h-screen min-h-[1100px] flex flex-col overflow-hidden bg-[#1c1e20] font-['Liberation_Sans',Arial,sans-serif]">
      <MenuBar />
      <TransportBar />
      <main className="flex-1 min-h-0 flex">
        <Sidebar />
        <ChannelStrip />
        <TrackHeaders />
        <Timeline />
        <div className="w-[19px] shrink-0 border-l border-[#141618] bg-[#25282c] flex flex-col justify-end items-center pb-[2px]">
          <button type="button" aria-label="Zoom to selection" className="text-[#8c9195]">
            <svg width="16" height="16" fill="none" stroke="currentColor" strokeWidth="1.500"><path d="M1 10V1H11" strokeDasharray="2 2" /><circle cx="9" cy="9" r="4.500" /><path d="M12 12L16 16M7 9H11M9 7V11" /></svg>
          </button>
        </div>
        <MasterPanel />
      </main>
      <StatusBar />
    </div>
  )
}
